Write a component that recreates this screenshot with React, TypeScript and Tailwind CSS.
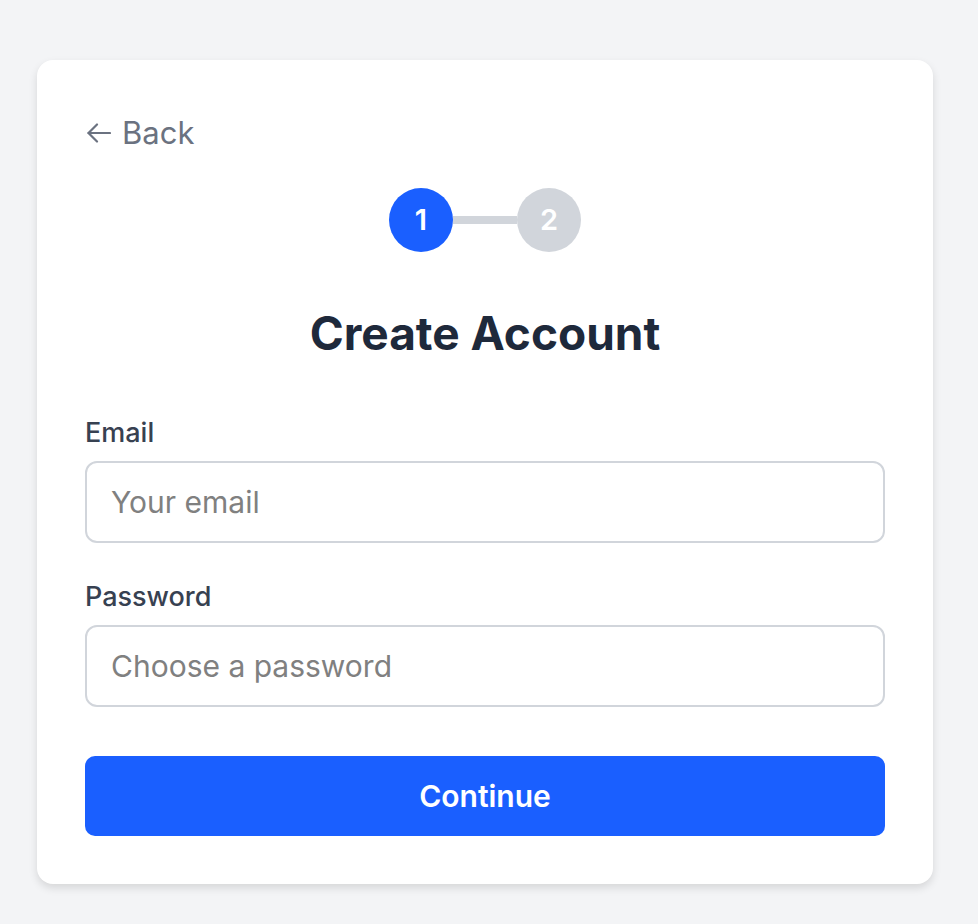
import React from 'react';

const ArrowLeft: React.FC = () => (
  <svg width="24" height="20" viewBox="0 0 24 20" fill="none" stroke="currentColor" strokeWidth="2.2" strokeLinecap="round" strokeLinejoin="round">
    <path d="M23 10H1.5" />
    <path d="M10 1.5L1.5 10l8.5 8.5" />
  </svg>
);

const App: React.FC = () => {
  return (
    <div className="min-h-screen bg-[#f3f4f6] pt-[60px] pl-[37px]" style={{ fontFamily: 'Inter, "Noto Sans", sans-serif' }}>
      <div className="w-[896px] bg-white rounded-2xl shadow-[0_4px_8px_rgba(0,0,0,0.12)] p-12">
        <button className="flex items-center gap-[11px] h-[50px] pl-[2px] text-[31px] text-[#6b7280]">
          <ArrowLeft />
          <span>Back</span>
        </button>

        <div className="flex items-center justify-center mt-[30px]">
          <div className="w-16 h-16 rounded-full bg-[#1a5fff] text-white text-[29px] font-semibold flex items-center justify-center">1</div>
          <div className="w-16 h-2 bg-[#d1d5db]" />
          <div className="w-16 h-16 rounded-full bg-[#d1d5db] text-white text-[29px] font-semibold flex items-center justify-center">2</div>
        </div>

        <h1 className="mt-14 text-center text-[46px] leading-[50px] font-bold text-[#1e293b]">Create Account</h1>

        <form className="mt-[59px]" onSubmit={(e) => e.preventDefault()}>
          <label className="block text-[27px] leading-8 font-medium text-[#374151]">Email</label>
          <input
            type="email"
            placeholder="Your email"
            className="mt-3 w-full h-[82px] px-6 border-2 border-[#d1d5db] rounded-xl text-[30px] text-[#111827] placeholder-[#808080] outline-none"
          />

          <label className="block mt-[38px] text-[27px] leading-8 font-medium text-[#374151]">Password</label>
          <input
            type="password"
            placeholder="Choose a password"
            className="mt-3 w-full h-[82px] px-6 border-2 border-[#d1d5db] rounded-xl text-[30px] text-[#111827] placeholder-[#808080] outline-none"
          />

          <button type="submit" className="mt-[49px] w-full h-20 rounded-[10px] bg-[#1a5fff] text-white text-[30px] font-semibold">
            Continue
          </button>
        </form>
      </div>
    </div>
  );
};

export default App;
